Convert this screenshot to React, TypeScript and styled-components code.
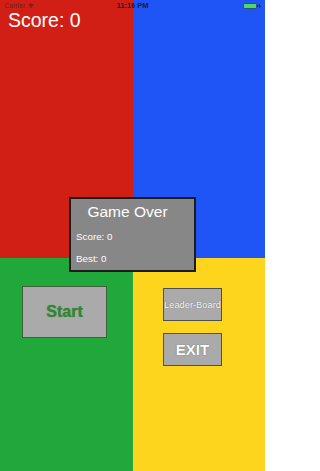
import styled, { createGlobalStyle } from "styled-components";

const GlobalStyle = createGlobalStyle`
  html, body {
    margin: 0;
    padding: 0;
  }
  body {
    font-family: "Liberation Sans", Arial, sans-serif;
  }
`;

const Screen = styled.div`
  position: relative;
  width: 265px;
  height: 471px;
  overflow: hidden;
`;

const Backdrop = styled.div`
  position: absolute;
  inset: 0;
  display: grid;
  grid-template-columns: 133px 1fr;
  grid-template-rows: 258px 1fr;
`;

const Quadrant = styled.div<{ color: string }>`
  background: ${(p) => p.color};
`;

const Content = styled.div`
  position: relative;
  display: flex;
  flex-direction: column;
`;

const StatusBar = styled.div`
  box-sizing: border-box;
  height: 9px;
  display: grid;
  grid-template-columns: 1fr auto 1fr;
  align-items: center;
  padding: 2px 4px 0 4px;
  font-size: 7px;
  line-height: 7px;
  overflow: visible;
`;

const Carrier = styled.div`
  display: flex;
  align-items: center;
  gap: 3px;
  color: #5a2a22;
`;

const Clock = styled.div`
  font-weight: 700;
  font-size: 7.5px;
  color: #1b1b3a;
`;

const Battery = styled.div`
  justify-self: end;
  display: flex;
  align-items: center;
`;

const Score = styled.div`
  margin-left: 8px;
  margin-top: 1px;
  font-size: 19.5px;
  line-height: 20px;
  color: #ffffff;
`;

const Panel = styled.div`
  align-self: center;
  margin-top: 167px;
  box-sizing: border-box;
  width: 127px;
  height: 75px;
  border: 2px solid #1c1c1c;
  background: #878787;
  display: flex;
  flex-direction: column;
  gap: 10px;
  padding-top: 4px;
  color: #ffffff;
`;

const Title = styled.div`
  text-align: center;
  padding-right: 10px;
  font-size: 15.5px;
  line-height: 18px;
`;

const Stat = styled.div`
  padding-left: 5px;
  font-size: 9.8px;
  line-height: 12px;
`;

const Controls = styled.div`
  display: flex;
  align-items: flex-start;
  margin-top: 14px;
`;

const Side = styled.div`
  display: flex;
  flex-direction: column;
  gap: 12px;
  margin-top: 2px;
  margin-left: 56px;
`;

const Button = styled.button<{ w: number; h: number; tone: string; size: number; bold?: boolean }>`
  width: ${(p) => p.w}px;
  height: ${(p) => p.h}px;
  box-sizing: border-box;
  margin: 0;
  padding: 0;
  border: 1px solid #4f4f4f;
  background: #aaaaaa;
  font-family: "Liberation Sans", Arial, sans-serif;
  font-size: ${(p) => p.size}px;
  font-weight: ${(p) => (p.bold ? 700 : 400)};
  color: ${(p) => p.tone};
  text-shadow: 0 0 1px rgba(60, 60, 60, 0.8);
  white-space: nowrap;
  display: flex;
  align-items: center;
  justify-content: center;
`;

const StartButton = styled(Button)`
  margin-left: 22px;
  border-color: #3f5f3f;
  text-shadow: 0 0 1px rgba(30, 90, 30, 0.6);
`;

const Wifi = () => (
  <svg width="6" height="5" viewBox="0 0 12 10">
    <path d="M1 4 Q6 -1 11 4" stroke="#4a1d18" strokeWidth="1.6" fill="none" />
    <path d="M3 6 Q6 3 9 6" stroke="#4a1d18" strokeWidth="1.6" fill="none" />
    <circle cx="6" cy="8.5" r="1.3" fill="#4a1d18" />
  </svg>
);

const BatteryIcon = () => (
  <svg width="18" height="6" viewBox="0 0 18 6">
    <rect x="0.5" y="0.5" width="13" height="5" rx="1" fill="#4cd964" stroke="#1b2a55" strokeWidth="0.6" />
    <rect x="14" y="2" width="1" height="2" fill="#1b2a55" />
    <path d="M16.5 1 L16 3 L17.3 3 L16.6 5" stroke="#111a3a" strokeWidth="0.7" fill="none" />
  </svg>
);

export default function App() {
  return (
    <Screen>
      <GlobalStyle />
      <Backdrop>
        <Quadrant color="#d21f15" />
        <Quadrant color="#1f55f6" />
        <Quadrant color="#20a83a" />
        <Quadrant color="#fcd51c" />
      </Backdrop>
      <Content>
        <StatusBar>
          <Carrier>
            Carrier <Wifi />
          </Carrier>
          <Clock>11:16 PM</Clock>
          <Battery>
            <BatteryIcon />
          </Battery>
        </StatusBar>
        <Score>Score: 0</Score>
        <Panel>
          <Title>Game Over</Title>
          <Stat>Score: 0</Stat>
          <Stat>Best: 0</Stat>
        </Panel>
        <Controls>
          <StartButton w={85} h={52} tone="#2b8a2b" size={16} bold>
            Start
          </StartButton>
          <Side>
            <Button w={59} h={33} tone="#ffffff" size={9.3}>
              Leader-Board
            </Button>
            <Button w={59} h={33} tone="#ffffff" size={15} bold>
              EXIT
            </Button>
          </Side>
        </Controls>
      </Content>
    </Screen>
  );
}
